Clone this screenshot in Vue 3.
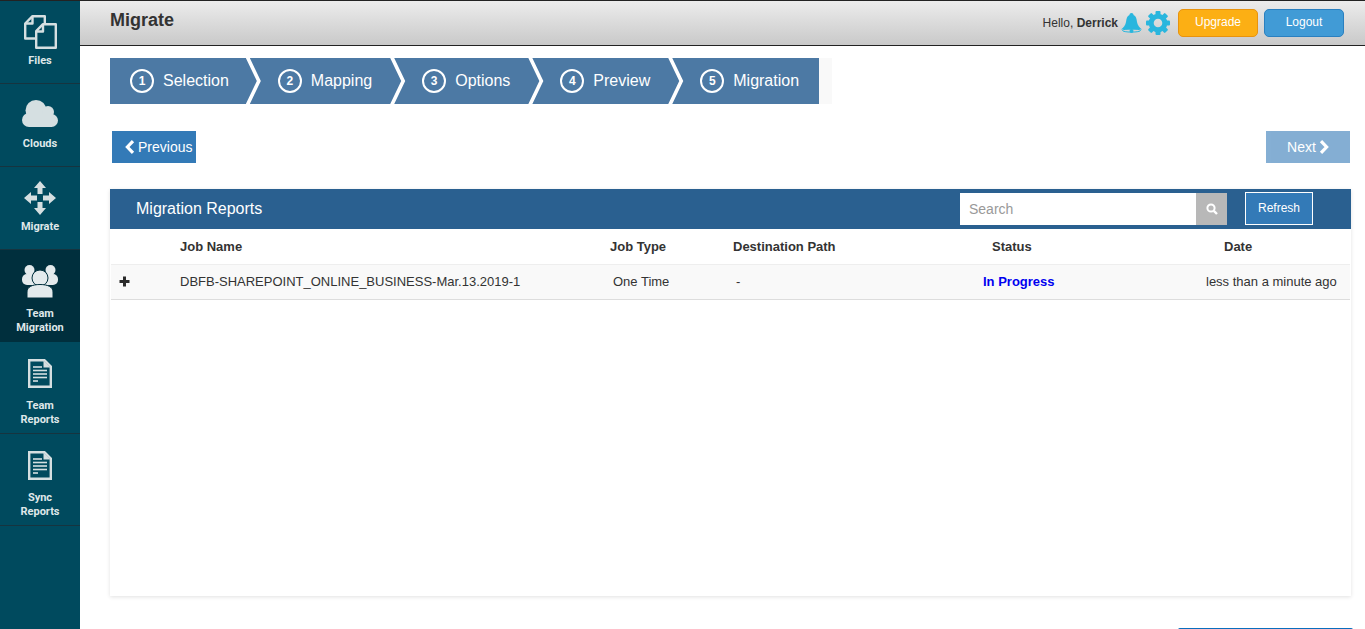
<template>
  <div class="app">
    <aside class="sidebar">
      <a v-for="item in navItems" :key="item.label" :class="['nav-item', item.icon, { active: item.active }]">
        <svg v-if="item.icon === 'files'" class="nav-icon" width="36" height="36" viewBox="0 0 36 36">
          <g fill="none" stroke="#d5dfe1" stroke-width="2.4" stroke-linejoin="round">
            <path d="M13 24.5H3.2V9.5L10.5 2.2H22.8V9" />
            <path d="M10.5 2.5V9.5H3.5" />
            <path d="M21 10.2H33.8V33.8H14.2V17.2Z" />
            <path d="M21 10.5V17.5H14.5" />
          </g>
        </svg>
        <svg v-else-if="item.icon === 'clouds'" class="nav-icon" width="36" height="27" viewBox="0 0 36 27">
          <g fill="#d5dfe1">
            <circle cx="7" cy="20" r="7" />
            <circle cx="14" cy="10.5" r="10.5" />
            <circle cx="26" cy="12" r="6" />
            <circle cx="29.5" cy="20.5" r="6.5" />
            <rect x="7" y="14" width="23" height="13" />
          </g>
        </svg>
        <svg v-else-if="item.icon === 'move'" class="nav-icon" width="32" height="34" viewBox="0 0 32 34">
          <g fill="#d5dfe1">
            <path d="M16 0L22 7H18.5V13H13.5V7H10Z" />
            <path d="M16 34L22 27H18.5V21H13.5V27H10Z" />
            <path d="M0 17L7 11V14.5H13V19.5H7V23Z" />
            <path d="M32 17L25 11V14.5H19V19.5H25V23Z" />
          </g>
        </svg>
        <svg v-else-if="item.icon === 'team'" class="nav-icon" width="36" height="33" viewBox="0 0 36 33">
          <g fill="#e3eaec">
            <circle cx="7.5" cy="5" r="5" />
            <circle cx="28.5" cy="5" r="5" />
            <rect x="0" y="9" width="36" height="11" rx="5" />
            <circle cx="18" cy="13" r="8" stroke="#002f3d" />
            <path d="M5 33V27C5 22 10 19.5 18 19.5C26 19.5 31 22 31 27V33Z" stroke="#002f3d" />
          </g>
        </svg>
        <svg v-else class="nav-icon" width="24" height="29" viewBox="0 0 24 29">
          <path d="M1.2 1.2H16.5L22.8 7.5V27.8H1.2Z" fill="none" stroke="#d5dfe1" stroke-width="2.4" />
          <path d="M15.5 1.5V8.5H22.5Z" fill="#d5dfe1" />
          <g stroke="#d5dfe1" stroke-width="1.6">
            <path d="M5 8H14" />
            <path d="M5 11.5H19" />
            <path d="M5 15H19" />
            <path d="M5 18.5H19" />
            <path d="M5 22H10" />
          </g>
        </svg>
        <span class="nav-label">{{ item.label }}</span>
      </a>
    </aside>

    <div class="main">
      <header class="topbar">
        <h1 class="page-title">Migrate</h1>
        <div class="user-area">
          <span class="hello">Hello, <b>Derrick</b></span>
          <svg class="bell" width="21" height="21" viewBox="0 0 21 21">
            <path fill="#29b6de" d="M10.5 0C12 0 12.6 1 12.5 2C15 3 15.5 5.5 16 9C16.5 12 18.5 14.5 21 16.5H0C2.5 14.5 4.5 12 5 9C5.5 5.5 6 3 8.5 2C8.4 1 9 0 10.5 0Z" />
            <ellipse cx="10.5" cy="17.5" rx="9" ry="1.6" fill="none" stroke="#29b6de" stroke-width="1" />
            <circle cx="10.5" cy="18" r="2" fill="#29b6de" />
          </svg>
          <svg class="gear" width="24" height="24" viewBox="0 0 24 24">
            <circle cx="12" cy="12" r="6.8" fill="none" stroke="#29b6de" stroke-width="5" />
            <rect v-for="angle in gearTeeth" :key="angle" x="9.5" y="0" width="5" height="5" rx="1" fill="#29b6de" :transform="`rotate(${angle} 12 12)`" />
          </svg>
          <button class="top-btn upgrade">Upgrade</button>
          <button class="top-btn logout">Logout</button>
        </div>
      </header>

      <div class="content">
        <div class="steps-wrap">
          <ol class="steps">
            <li v-for="(step, i) in steps" :key="step" class="step">
              <span class="step-num">{{ i + 1 }}</span>
              <span>{{ step }}</span>
            </li>
          </ol>
        </div>

        <div class="wizard-nav">
          <button class="nav-btn prev">
            <svg width="10" height="14" viewBox="0 0 10 14"><path d="M8 1.2L2.4 7L8 12.8" fill="none" stroke="#fff" stroke-width="3.2" /></svg>
            Previous
          </button>
          <button class="nav-btn disabled">
            Next
            <svg width="10" height="14" viewBox="0 0 10 14"><path d="M2 1.2L7.6 7L2 12.8" fill="none" stroke="#fff" stroke-width="3.2" /></svg>
          </button>
        </div>

        <section class="panel">
          <div class="panel-head">
            <h2 class="panel-title">Migration Reports</h2>
            <div class="search">
              <input class="search-input" type="text" placeholder="Search" />
              <span class="search-btn">
                <svg width="12" height="12" viewBox="0 0 12 12">
                  <circle cx="5" cy="5" r="3.6" fill="none" stroke="#fff" stroke-width="2" />
                  <path d="M7.8 7.8L11 11" stroke="#fff" stroke-width="2.4" />
                </svg>
              </span>
            </div>
            <button class="refresh">Refresh</button>
          </div>

          <div class="table-row table-head">
            <span></span>
            <span>Job Name</span>
            <span>Job Type</span>
            <span>Destination Path</span>
            <span>Status</span>
            <span>Date</span>
          </div>
          <div class="table-row job">
            <svg class="plus" width="11" height="11" viewBox="0 0 11 11">
              <path d="M5.5 0.5V10.5M0.5 5.5H10.5" stroke="#2b2b2b" stroke-width="3" />
            </svg>
            <span>DBFB-SHAREPOINT_ONLINE_BUSINESS-Mar.13.2019-1</span>
            <span>One Time</span>
            <span>-</span>
            <span class="progress">In Progress</span>
            <span>less than a minute ago</span>
          </div>
        </section>

        <div class="footer-line"><span class="footer-btn"></span></div>
      </div>
    </div>
  </div>
</template>

<script setup>
const navItems = [
  { label: 'Files', icon: 'files' },
  { label: 'Clouds', icon: 'clouds' },
  { label: 'Migrate', icon: 'move' },
  { label: 'Team Migration', icon: 'team', active: true },
  { label: 'Team Reports', icon: 'doc' },
  { label: 'Sync Reports', icon: 'doc' },
]

const steps = ['Selection', 'Mapping', 'Options', 'Preview', 'Migration']

const gearTeeth = [0, 45, 90, 135, 180, 225, 270, 315]
</script>

<style>
html,
body {
  margin: 0;
  height: 100%;
  overflow: hidden;
  background: #fff;
}
</style>

<style scoped>
.app {
  display: flex;
  height: 629px;
  overflow: hidden;
  font-family: 'Liberation Sans', Arial, sans-serif;
  color: #333;
}

.sidebar {
  width: 80px;
  flex: none;
  background: #004a5e;
  border-top: 1px solid #222;
  box-sizing: border-box;
}

.nav-item {
  display: flex;
  flex-direction: column;
  align-items: center;
  box-sizing: border-box;
  height: 83px;
  border-bottom: 1px solid #16343f;
  color: #dfe7e9;
  font-family: Roboto, sans-serif;
  font-size: 11px;
  font-weight: 700;
  line-height: 14px;
  text-align: center;
}

.nav-item.files {
  padding-top: 13px;
}

.nav-item.clouds {
  padding-top: 16px;
}

.nav-item.move {
  padding-top: 14px;
}

.nav-item.team {
  height: 92px;
  padding-top: 15px;
  background: #002f3d;
  border-bottom: 0;
}

.nav-item.doc {
  height: 92px;
  padding-top: 17px;
}

.nav-icon {
  display: block;
  flex: none;
}

.files .nav-label {
  margin-top: 4px;
}

.clouds .nav-label {
  margin-top: 10px;
}

.move .nav-label {
  margin-top: 5px;
}

.team .nav-label {
  margin-top: 9px;
  width: 60px;
}

.doc .nav-label {
  margin-top: 11px;
  width: 60px;
}

.main {
  flex: 1;
  min-width: 0;
}

.topbar {
  display: flex;
  align-items: center;
  justify-content: space-between;
  box-sizing: border-box;
  height: 46px;
  padding: 0 21px 5px 30px;
  background: linear-gradient(#ececec, #c9c9c9);
  border-top: 1px solid #222;
  border-bottom: 1px solid #222;
}

.page-title {
  margin: 0;
  font-size: 18px;
  font-weight: 700;
  color: #333;
}

.user-area {
  display: flex;
  align-items: center;
  padding-top: 5px;
}

.hello {
  font-size: 12px;
  color: #333;
  margin-right: 3px;
}

.bell {
  margin-right: 4px;
}

.gear {
  margin-right: 8px;
}

.top-btn {
  width: 80px;
  height: 28px;
  margin: 0 0 0 6px;
  padding: 0 0 2px;
  border-radius: 5px;
  color: #fff;
  font: 12px 'Liberation Sans', Arial, sans-serif;
}

.upgrade {
  margin-left: 0;
  background: #fcaf14;
  border: 1px solid #e8930e;
}

.logout {
  background: #419bd6;
  border: 1px solid #2a80c0;
}

.content {
  padding: 12px 14px 0 30px;
}

.steps-wrap {
  width: 722px;
  background: #f9f9f9;
}

.steps {
  display: inline-flex;
  list-style: none;
  margin: 0;
  padding: 0;
  height: 46px;
  vertical-align: top;
  background: #4c79a4;
  color: #fff;
  font-size: 16px;
}

.step {
  position: relative;
  display: flex;
  align-items: center;
  gap: 9px;
  padding: 0 20px 0 30px;
}

.step:first-child {
  padding: 0 19px 0 20px;
}

.step:not(:last-child)::after {
  content: '';
  position: absolute;
  top: 0;
  right: -14px;
  width: 16px;
  height: 46px;
  background: #fff;
  clip-path: polygon(0 0, 4px 0, 15px 50%, 4px 100%, 0 100%, 11px 50%);
}

.step-num {
  box-sizing: border-box;
  width: 24px;
  height: 24px;
  border: 2px solid #fff;
  border-radius: 50%;
  font-size: 12px;
  font-weight: 700;
  line-height: 20px;
  text-align: center;
}

.wizard-nav {
  display: flex;
  justify-content: space-between;
  margin: 27px 1px 26px 2px;
}

.nav-btn {
  display: flex;
  align-items: center;
  justify-content: center;
  gap: 3px;
  box-sizing: border-box;
  width: 84px;
  height: 32px;
  padding: 0;
  border: 0;
  background: #337ab7;
  color: #fff;
  font: 14px 'Liberation Sans', Arial, sans-serif;
}

.nav-btn.prev {
  justify-content: flex-start;
  padding-left: 13px;
}

.nav-btn.disabled {
  opacity: 0.6;
}

.panel {
  height: 407px;
  box-shadow: 0 1px 4px rgba(0, 0, 0, 0.12);
}

.panel-head {
  display: flex;
  align-items: center;
  height: 40px;
  padding: 0 38px 0 26px;
  background: #2a6090;
}

.panel-title {
  margin: 0 auto 0 0;
  color: #fff;
  font-size: 16px;
  font-weight: 400;
}

.search {
  display: flex;
  height: 32px;
}

.search-input {
  box-sizing: border-box;
  width: 236px;
  height: 32px;
  padding: 0 9px;
  border: 0;
  outline: 0;
  font: 14px 'Liberation Sans', Arial, sans-serif;
}

.search-input::placeholder {
  color: #999;
  opacity: 1;
}

.search-btn {
  display: flex;
  align-items: center;
  justify-content: center;
  width: 31px;
  background: #b8b8b8;
}

.refresh {
  box-sizing: border-box;
  width: 68px;
  height: 33px;
  margin: 0 0 1px 18px;
  padding: 0 0 2px;
  background: #337ab7;
  border: 1px solid #fff;
  color: #fff;
  font: 12px 'Liberation Sans', Arial, sans-serif;
}

.table-row {
  display: grid;
  align-items: center;
  margin-left: 1px;
  margin-right: 1px;
  font-size: 13px;
  color: #333;
}

.table-head {
  grid-template-columns: 69px 430px 123px 259px 232px 1fr;
  height: 35px;
  font-weight: 700;
}

.job {
  grid-template-columns: 69px 433px 123px 247px 223px 1fr;
  box-sizing: border-box;
  height: 36px;
  padding-bottom: 1px;
  background: #f9f9f9;
  border-top: 1px solid #eee;
  border-bottom: 1px solid #ddd;
}

.plus {
  margin-left: 8px;
}

.progress {
  font-size: 13px;
  font-weight: 700;
  color: #0000f0;
}

.footer-line {
  display: flex;
  justify-content: flex-end;
  margin-top: 32px;
  margin-right: -2px;
}

.footer-btn {
  width: 175px;
  height: 30px;
  background: #0a6ebd;
  border-radius: 2px;
}
</style>
